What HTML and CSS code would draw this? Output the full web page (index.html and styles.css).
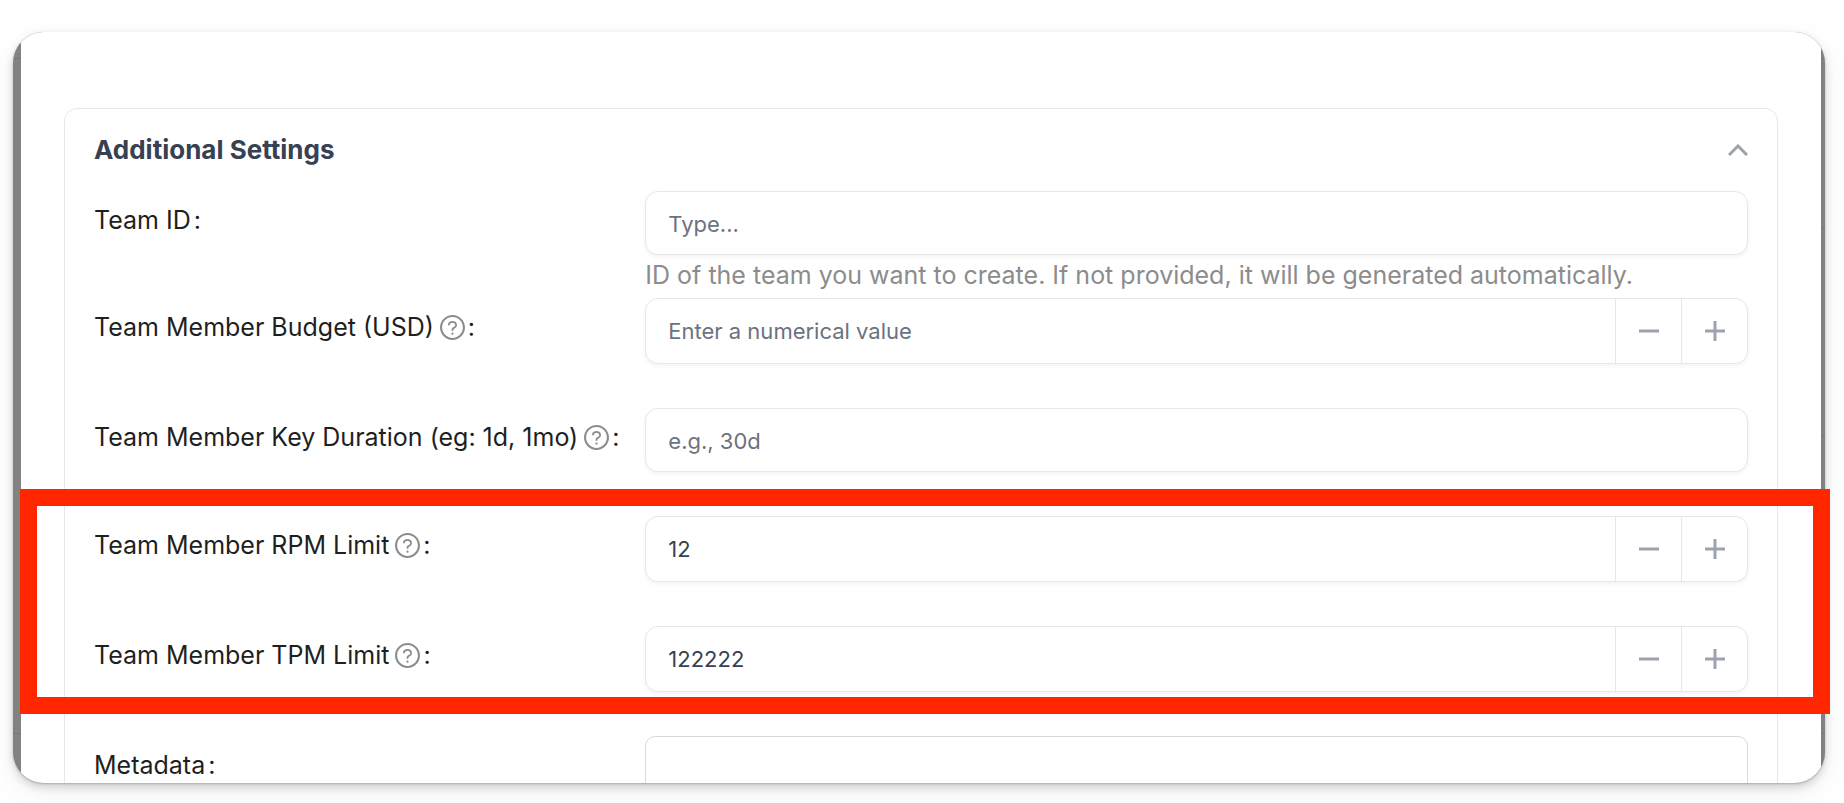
FILE: index.html
```html
<!DOCTYPE html>
<html lang="en">
<head>
<meta charset="utf-8">
<title>Additional Settings</title>
<link rel="stylesheet" href="styles.css">
</head>
<body>
<svg class="sprite" aria-hidden="true">
  <symbol id="help" viewBox="64 64 896 896">
    <path d="M512 64C264.600 64 64 264.600 64 512s200.600 448 448 448 448-200.600 448-448S759.400 64 512 64zm0 820c-205.400 0-372-166.600-372-372s166.600-372 372-372 372 166.600 372 372-166.600 372-372 372z"/>
    <path d="M623.600 316.700C593.600 290.400 554 276 512 276s-81.600 14.500-111.600 40.700C369.200 344 352 380.700 352 420v7.600c0 4.400 3.600 8 8 8h48c4.400 0 8-3.600 8-8V420c0-44.100 43.100-80 96-80s96 35.900 96 80c0 31.100-22 59.600-56.100 72.700-21.200 8.100-39.200 22.300-52.100 40.900-13.100 19-19.900 41.800-19.900 64.900V620c0 4.400 3.600 8 8 8h48c4.400 0 8-3.600 8-8v-22.700a48.300 48.300 0 0 1 30.900-44.800c59-22.700 97.100-74.700 97.100-132.500.1-39.300-17.100-76-48.300-103.300zM472 732a40 40 0 1 0 80 0 40 40 0 1 0-80 0z"/>
  </symbol>
  <symbol id="minus" viewBox="0 0 20 20"><path d="M0 10h20" stroke="currentColor" stroke-width="3"/></symbol>
  <symbol id="plus" viewBox="0 0 20 20"><path d="M0 10h20M10 0v20" stroke="currentColor" stroke-width="3"/></symbol>
</svg>
<main class="window">
  <div class="dialog">
    <section class="panel">
      <header class="panel-header">
        <h2 class="panel-title">Additional Settings</h2>
        <button class="collapse" type="button" aria-label="Collapse">
          <svg width="20" height="12" viewBox="0 0 20 12" fill="none" stroke="currentColor" stroke-width="3"><path d="M1 11L10 2l9 9"/></svg>
        </button>
      </header>
      <form class="form">
        <div class="row row-tight">
          <div class="label-cell"><label for="team-id">Team ID</label><span class="colon">:</span></div>
          <div class="control">
            <input class="field" id="team-id" type="text" placeholder="Type...">
            <p class="hint">ID of the team you want to create. If not provided, it will be generated automatically.</p>
          </div>
        </div>
        <div class="row">
          <div class="label-cell"><label for="budget">Team Member Budget (USD)</label><svg class="help"><use href="#help"/></svg><span class="colon">:</span></div>
          <div class="control stepper">
            <input class="stepper-input" id="budget" type="text" inputmode="decimal" placeholder="Enter a numerical value">
            <button class="step" type="button" aria-label="Decrease"><svg class="step-icon"><use href="#minus"/></svg></button>
            <button class="step" type="button" aria-label="Increase"><svg class="step-icon"><use href="#plus"/></svg></button>
          </div>
        </div>
        <div class="row">
          <div class="label-cell"><label for="duration">Team Member Key Duration (eg: 1d, 1mo)</label><svg class="help"><use href="#help"/></svg><span class="colon">:</span></div>
          <div class="control"><input class="field" id="duration" type="text" placeholder="e.g., 30d"></div>
        </div>
        <div class="row">
          <div class="label-cell"><label for="rpm">Team Member RPM Limit</label><svg class="help"><use href="#help"/></svg><span class="colon">:</span></div>
          <div class="control stepper">
            <input class="stepper-input" id="rpm" type="text" inputmode="numeric" value="12">
            <button class="step" type="button" aria-label="Decrease"><svg class="step-icon"><use href="#minus"/></svg></button>
            <button class="step" type="button" aria-label="Increase"><svg class="step-icon"><use href="#plus"/></svg></button>
          </div>
        </div>
        <div class="row">
          <div class="label-cell"><label for="tpm">Team Member TPM Limit</label><svg class="help"><use href="#help"/></svg><span class="colon">:</span></div>
          <div class="control stepper">
            <input class="stepper-input" id="tpm" type="text" inputmode="numeric" value="122222">
            <button class="step" type="button" aria-label="Decrease"><svg class="step-icon"><use href="#minus"/></svg></button>
            <button class="step" type="button" aria-label="Increase"><svg class="step-icon"><use href="#plus"/></svg></button>
          </div>
        </div>
        <div class="row">
          <div class="label-cell"><label for="metadata">Metadata</label><span class="colon">:</span></div>
          <div class="control"><textarea class="area" id="metadata" rows="4"></textarea></div>
        </div>
      </form>
    </section>
  </div>
</main>
<div class="highlight"></div>
</body>
</html>
```
FILE: styles.css
```css
* { box-sizing: border-box; }

body {
  margin: 0;
  height: 100vh;
  padding: 32px 19px 20px 13px;
  position: relative;
  overflow: hidden;
  background: #fff;
  color: #1f1f1f;
  font-family: Inter, "Liberation Sans", sans-serif;
  font-size: 25px;
  line-height: 32px;
}

.sprite { display: none; }

/* Dimmed page behind the dialog, with its faint divider lines */
.window {
  height: 100%;
  padding: 0 4px 0 8px;
  overflow: hidden;
  border-radius: 31px;
  background:
    linear-gradient(#787878, #787878) 0 26px / 100% 1px no-repeat,
    linear-gradient(#787878, #787878) 100% 195px / 4px 1px no-repeat,
    linear-gradient(#787878, #787878) 100% 403px / 4px 1px no-repeat,
    linear-gradient(#787878, #787878) 0 701px / 100% 1px no-repeat,
    #828282;
  box-shadow: 0 1px 2px rgba(0, 0, 0, 0.2), 0 4px 10px rgba(0, 0, 0, 0.16), 0 10px 32px rgba(0, 0, 0, 0.06);
}

.dialog {
  min-height: 100%;
  padding: 76px 43px 0;
  background: #fff;
}

.panel {
  padding: 0 29px;
  border: 1px solid #e5e7eb;
  border-radius: 13px;
}

.panel-header {
  display: flex;
  align-items: center;
  justify-content: space-between;
  height: 82px;
}

.panel-title {
  margin: 0;
  color: #374151;
  font-size: 26px;
  font-weight: 700;
}

.collapse {
  display: flex;
  padding: 0;
  border: 0;
  background: none;
  color: #9ca3af;
}

.row {
  display: grid;
  grid-template-columns: 1fr 2fr;
  margin-bottom: 44px;
}

.row-tight { margin-bottom: 0; }

.label-cell {
  display: flex;
  align-items: center;
  height: 58px;
  white-space: nowrap;
}

.help {
  width: 25px;
  height: 25px;
  margin-left: 6px;
  fill: #8c8c8c;
}

.colon { margin-left: 3px; }

.field,
.stepper,
.area {
  width: 100%;
  border: 1px solid #e5e7eb;
  border-radius: 13px;
  background: #fff;
  box-shadow: 0 2px 4px rgba(0, 0, 0, 0.05);
}

.field,
.stepper-input {
  display: block;
  padding: 0 22px;
  color: #374151;
  font-family: inherit;
  font-size: 22px;
  outline: 0;
}

.field { height: 64px; padding-top: 1px; }

.field::placeholder,
.stepper-input::placeholder { color: #6b7280; opacity: 1; }

.hint {
  margin: 0;
  padding: 4px 0 7px;
  color: #8c8c8c;
  white-space: nowrap;
}

.stepper {
  display: flex;
  height: 66px;
  overflow: hidden;
}

.stepper-input {
  flex: 1;
  min-width: 0;
  border: 0;
  background: none;
}

.step {
  display: flex;
  align-items: center;
  justify-content: center;
  width: 66px;
  padding: 0;
  border: 0;
  border-left: 1px solid #e5e7eb;
  background: none;
  color: #9ca3af;
}

.step-icon {
  width: 20px;
  height: 20px;
}

.area {
  display: block;
  height: 130px;
  border-color: #d9d9d9;
  border-radius: 10px;
  box-shadow: none;
  resize: none;
}

/* Callout frame drawn over the rate limit rows */
.highlight {
  position: absolute;
  top: 489px;
  left: 20px;
  right: 14px;
  height: 225px;
  border: 17px solid #ff2600;
  pointer-events: none;
}
```
